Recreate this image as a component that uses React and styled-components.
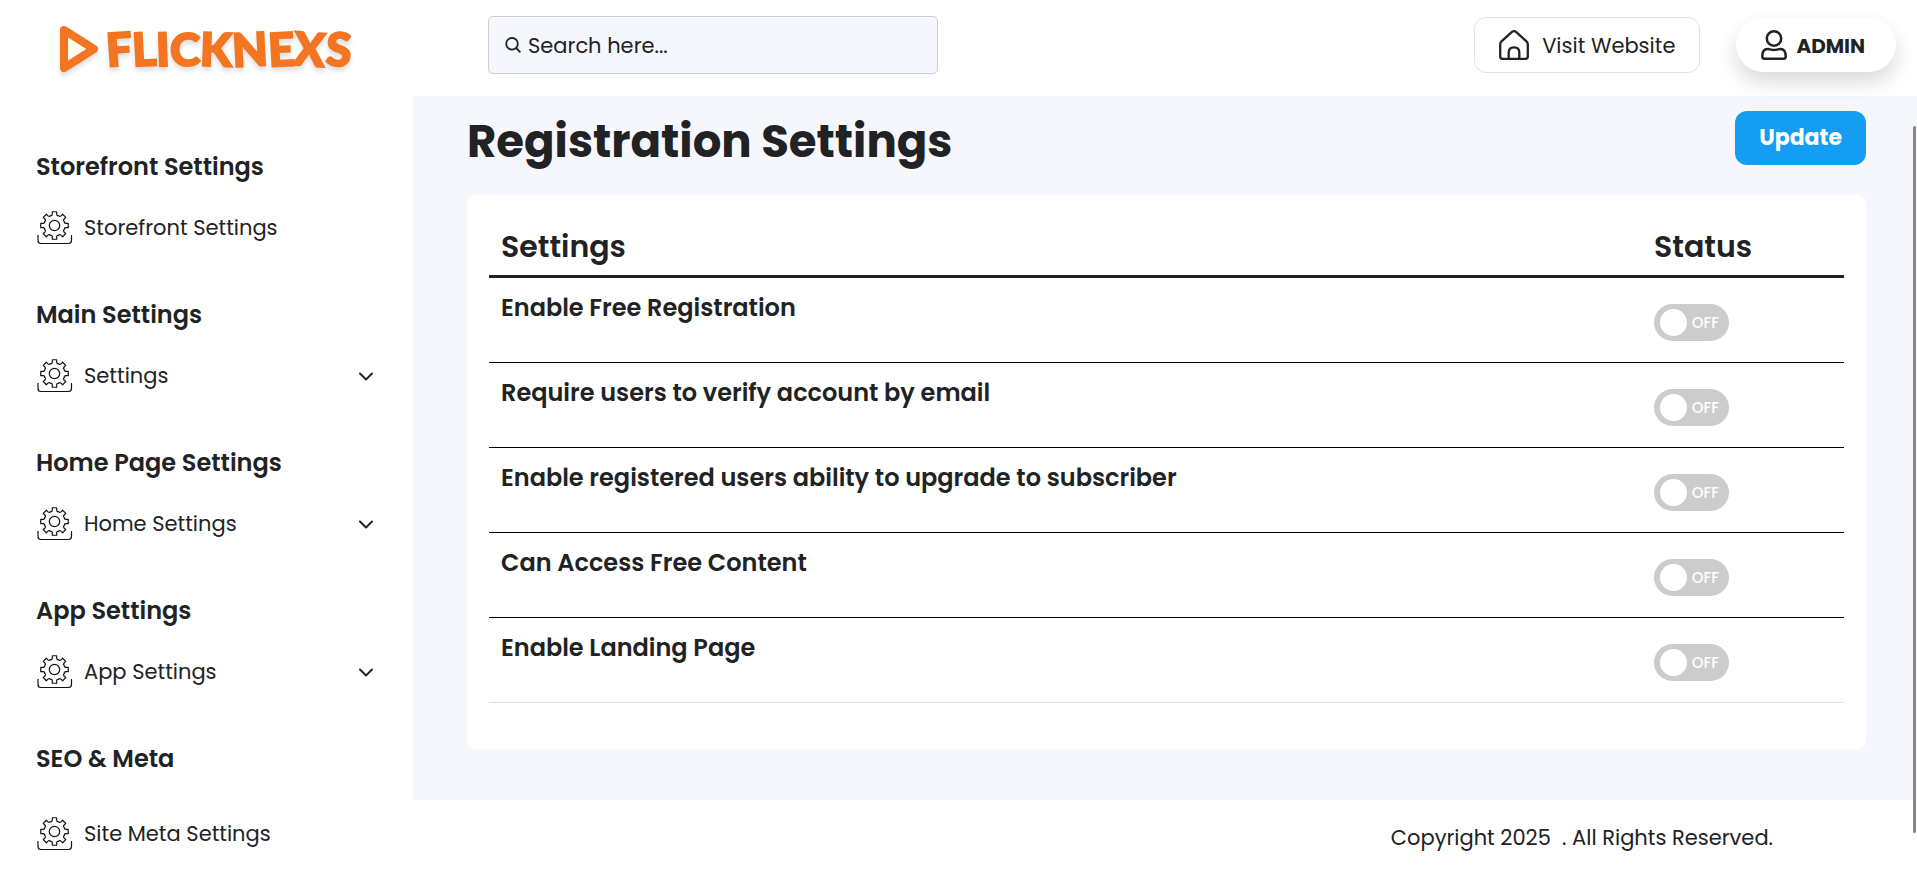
import React, { useState } from "react";
import styled, { createGlobalStyle } from "styled-components";

const ink = "#202224";
const sidebarWidth = "413px";

const GlobalStyle = createGlobalStyle`
  *, *::before, *::after { box-sizing: border-box; }
  body {
    margin: 0;
    background: #fff;
    color: ${ink};
    font-family: Poppins, Inter, sans-serif;
    font-size: 21px;
    line-height: 24px;
  }
  button, input { font: inherit; color: inherit; }
`;

const Shell = styled.div`
  display: flex;
  flex-direction: column;
  min-height: 100vh;
`;

const Header = styled.header`
  position: relative;
  z-index: 1;
  display: flex;
  align-items: center;
  height: 96px;
  padding: 0 21px 6px 0;
  background: #fff;
`;

const Brand = styled.a`
  display: flex;
  align-items: center;
  gap: 7px;
  flex: none;
  width: ${sidebarWidth};
  padding: 8px 0 0 60px;
  text-decoration: none;
  filter: drop-shadow(0 4px 2px rgba(0, 0, 0, 0.12));
`;

const Wordmark = styled.span`
  display: flex;
  color: #f37521;
  font: 900 46px/48px Lato, sans-serif;
  -webkit-text-stroke: 2px #f37521;
`;

const Letter = styled.span`
  display: block;
  transform: rotate(${(p) => p.$tilt}deg);
`;

const SearchBox = styled.label`
  display: flex;
  align-items: center;
  gap: 7px;
  width: 450px;
  height: 58px;
  margin-left: 75px;
  padding: 0 16px;
  border: 1px solid #ccc;
  border-radius: 5px;
  background: #f6f7fc;
`;

const SearchInput = styled.input`
  flex: 1;
  min-width: 0;
  padding: 2px 0 0;
  border: 0;
  outline: 0;
  background: transparent;
  &::placeholder { color: ${ink}; opacity: 1; }
`;

const Actions = styled.div`
  display: flex;
  align-items: center;
  gap: 36px;
  margin-left: auto;
`;

const ActionLabel = styled.span`
  padding-top: 2px;
`;

const VisitLink = styled.a`
  display: flex;
  align-items: center;
  gap: 13px;
  height: 56px;
  padding: 0 24px;
  border: 1px solid #dee2e6;
  border-radius: 12px;
  color: ${ink};
  text-decoration: none;
  white-space: nowrap;
`;

const AdminButton = styled.button`
  display: flex;
  align-items: center;
  gap: 9px;
  height: 54px;
  padding: 0 31px 0 25px;
  border: 0;
  border-radius: 27px;
  background: #fff;
  box-shadow: 0 10px 20px rgba(0, 0, 0, 0.15);
  font-size: 20px;
  font-weight: 700;
`;

const Body = styled.div`
  display: flex;
  flex: 1;
`;

const Sidebar = styled.nav`
  display: flex;
  flex-direction: column;
  gap: 55px;
  flex: none;
  width: ${sidebarWidth};
  padding: 56px 40px 20px 36px;
`;

const SectionTitle = styled.h2`
  margin: 0 0 ${(p) => (p.$roomy ? "43px" : "29px")};
  font-size: 24px;
  font-weight: 600;
  line-height: 30px;
`;

const NavItem = styled.a`
  display: flex;
  align-items: center;
  gap: 11px;
  height: 34px;
  color: ${ink};
  text-decoration: none;
`;

const NavLabel = styled.span`
  flex: 1;
`;

const Content = styled.div`
  display: flex;
  flex-direction: column;
  flex: 1;
  min-width: 0;
`;

const Main = styled.main`
  flex: 1;
  padding: 15px 51px 51px 54px;
  background: #f6f7fc;
`;

const TitleRow = styled.div`
  display: flex;
  justify-content: space-between;
  align-items: flex-start;
  margin-bottom: 22px;
`;

const PageTitle = styled.h1`
  margin: 0;
  font-size: 45px;
  font-weight: 700;
  line-height: 62px;
`;

const UpdateButton = styled.button`
  height: 54px;
  padding: 0 24px;
  border: 0;
  border-radius: 12px;
  background: #149df2;
  color: #fff;
  font-size: 22px;
  font-weight: 700;
`;

const Card = styled.section`
  padding: 20px 22px 46px;
  border-radius: 8px;
  background: #fff;
`;

const Table = styled.table`
  width: 100%;
  border-spacing: 0;
  table-layout: fixed;
`;

const HeadCell = styled.th`
  width: ${(p) => (p.$narrow ? "202px" : "auto")};
  padding: 13px 12px 9px;
  border-bottom: 3px solid ${ink};
  font-size: 30px;
  font-weight: 600;
  line-height: 38px;
  text-align: left;
`;

const Row = styled.tr`
  & > * { border-bottom: 1px solid #000; }
  &:last-child > * { border-bottom-color: #dee2e6; }
`;

const NameCell = styled.th`
  padding: 15px 12px;
  font-size: 24px;
  font-weight: 600;
  line-height: 30px;
  text-align: left;
  vertical-align: top;
`;

const StatusCell = styled.td`
  padding: 26px 12px 21px;
`;

const Toggle = styled.label`
  display: flex;
  flex-direction: ${(p) => (p.$on ? "row-reverse" : "row")};
  align-items: center;
  justify-content: space-between;
  width: 75px;
  height: 37px;
  padding: 0 10px 0 6px;
  border-radius: 19px;
  background: ${(p) => (p.$on ? "#149df2" : "#ccc")};
  color: #fff;
  font-size: 15px;
  font-weight: 500;
  cursor: pointer;
`;

const Knob = styled.input`
  appearance: none;
  width: 27px;
  height: 27px;
  margin: 0;
  border-radius: 50%;
  background: #fff;
  cursor: pointer;
`;

const Footer = styled.footer`
  padding: 26px 144px 21px 54px;
  text-align: right;
`;

const ScrollThumb = styled.div`
  position: fixed;
  z-index: 2;
  top: 126px;
  right: 1px;
  bottom: 38px;
  width: 3px;
  border-radius: 2px;
  background: #868686;
`;

const LETTERS = [
  ["F", -4], ["L", -3], ["I", -2], ["C", 0], ["K", 2], ["N", -3], ["E", -3], ["X", 4], ["S", 3],
];

function PlayMark() {
  return (
    <svg width="39" height="48" viewBox="0 0 39 48" aria-hidden="true">
      <path d="M4 5 34 24 4 43Z" fill="#fffbea" stroke="#f37521" strokeWidth="8" strokeLinejoin="round" />
    </svg>
  );
}

function SearchIcon() {
  return (
    <svg width="16" height="16" viewBox="0 0 16 16" fill="none" stroke={ink} strokeWidth="1.8" aria-hidden="true">
      <circle cx="7" cy="6.8" r="5.8" />
      <path d="m11.2 11 4.2 4.3" />
    </svg>
  );
}

function HouseIcon() {
  return (
    <svg width="30" height="30" viewBox="0 0 30 30" fill="none" stroke={ink} strokeWidth="2.3" strokeLinejoin="round" aria-hidden="true">
      <path d="M1.2 14.2C1.2 13 1.6 12.2 2.5 11.4L12.4 2.3C14 .9 16 .9 17.6 2.3L27.5 11.4C28.4 12.2 28.8 13 28.8 14.2V26.5Q28.8 28.8 26.5 28.8H3.5Q1.2 28.8 1.2 26.5Z" />
      <path d="M9.7 29V22.5C9.7 19 11.8 17.3 15 17.3S20.3 19 20.3 22.5V29" />
    </svg>
  );
}

function UserIcon() {
  return (
    <svg width="26" height="30" viewBox="0 0 26 30" fill="none" stroke={ink} strokeWidth="2.5" strokeLinejoin="round" aria-hidden="true">
      <circle cx="13" cy="8.5" r="7.2" />
      <path d="M1.3 26.5C1.3 21.5 3.6 18.9 6.5 18.9C8.6 18.9 9.8 20.1 13 20.1S17.4 18.9 19.5 18.9C22.4 18.9 24.7 21.5 24.7 26.5Q24.7 28.7 22.6 28.7H3.4Q1.3 28.7 1.3 26.5Z" />
    </svg>
  );
}

const polar = (radius, degrees) => {
  const a = (degrees * Math.PI) / 180;
  return `${(18.5 + radius * Math.sin(a)).toFixed(2)} ${(14.5 - radius * Math.cos(a)).toFixed(2)}`;
};

// Eight flat-topped teeth joined by shallow curved valleys.
const gearPath =
  Array.from({ length: 8 }, (_, i) => {
    const a = i * 45;
    return `${i ? "L" : "M"}${polar(13.9, a - 9)}L${polar(13.9, a + 9)}L${polar(11.6, a + 11)}Q${polar(9.8, a + 14)} ${polar(10.6, a + 22.5)}Q${polar(9.8, a + 31)} ${polar(11.6, a + 34)}`;
  }).join("") + "Z";

function GearIcon() {
  return (
    <svg width="37" height="34" viewBox="0 0 37 34" fill="none" stroke="#111" strokeWidth="1.2" strokeLinejoin="round" aria-hidden="true">
      <path d={gearPath} />
      <circle cx="18.5" cy="14.5" r="5.2" />
      <path d="M2 24V29.500Q2 32.500 5 32.500H32.500Q35.500 32.500 35.500 29.500V24" />
    </svg>
  );
}

function ChevronIcon() {
  return (
    <svg width="14" height="9" viewBox="0 0 14 9" fill="none" stroke={ink} strokeWidth="2" strokeLinecap="round" strokeLinejoin="round" aria-hidden="true">
      <path d="m1 1.500 6 6 6-6" />
    </svg>
  );
}

const SECTIONS = [
  { title: "Storefront Settings", item: "Storefront Settings" },
  { title: "Main Settings", item: "Settings", expandable: true },
  { title: "Home Page Settings", item: "Home Settings", expandable: true },
  { title: "App Settings", item: "App Settings", expandable: true },
  { title: "SEO & Meta", item: "Site Meta Settings", roomy: true },
];

const SETTINGS = [
  "Enable Free Registration",
  "Require users to verify account by email",
  "Enable registered users ability to upgrade to subscriber",
  "Can Access Free Content",
  "Enable Landing Page",
];

function SettingRow({ name, id }) {
  const [on, setOn] = useState(false);
  return (
    <Row>
      <NameCell scope="row" id={id}>{name}</NameCell>
      <StatusCell>
        <Toggle $on={on}>
          <Knob type="checkbox" role="switch" checked={on} aria-labelledby={id} onChange={(e) => setOn(e.target.checked)} />
          {on ? "ON" : "OFF"}
        </Toggle>
      </StatusCell>
    </Row>
  );
}

export default function App() {
  return (
    <Shell>
      <GlobalStyle />
      <Header>
        <Brand href="#">
          <PlayMark />
          <Wordmark>
            {LETTERS.map(([char, tilt]) => (
              <Letter key={char} $tilt={tilt}>{char}</Letter>
            ))}
          </Wordmark>
        </Brand>
        <SearchBox>
          <SearchIcon />
          <SearchInput type="text" placeholder="Search here..." aria-label="Search" />
        </SearchBox>
        <Actions>
          <VisitLink href="#">
            <HouseIcon />
            <ActionLabel>Visit Website</ActionLabel>
          </VisitLink>
          <AdminButton type="button">
            <UserIcon />
            <ActionLabel>ADMIN</ActionLabel>
          </AdminButton>
        </Actions>
      </Header>
      <Body>
        <Sidebar>
          {SECTIONS.map(({ title, item, expandable, roomy }) => (
            <section key={title}>
              <SectionTitle $roomy={roomy}>{title}</SectionTitle>
              <NavItem href="#">
                <GearIcon />
                <NavLabel>{item}</NavLabel>
                {expandable && <ChevronIcon />}
              </NavItem>
            </section>
          ))}
        </Sidebar>
        <Content>
          <Main>
            <TitleRow>
              <PageTitle>Registration Settings</PageTitle>
              <UpdateButton type="submit">Update</UpdateButton>
            </TitleRow>
            <Card>
              <Table>
                <thead>
                  <tr>
                    <HeadCell scope="col">Settings</HeadCell>
                    <HeadCell scope="col" $narrow>Status</HeadCell>
                  </tr>
                </thead>
                <tbody>
                  {SETTINGS.map((name, i) => (
                    <SettingRow key={name} name={name} id={`setting-${i}`} />
                  ))}
                </tbody>
              </Table>
            </Card>
          </Main>
          <Footer>Copyright 2025 &nbsp;. All Rights Reserved.</Footer>
        </Content>
      </Body>
      <ScrollThumb />
    </Shell>
  );
}
